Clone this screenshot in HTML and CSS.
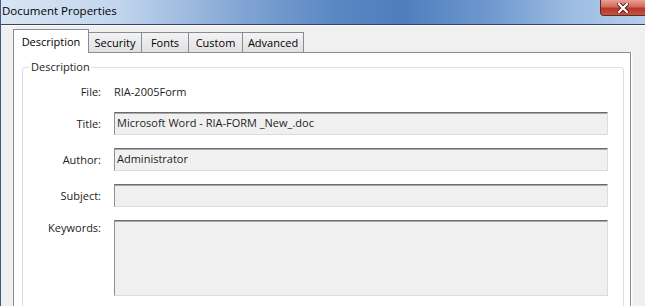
FILE: index.html
```html
<!DOCTYPE html>
<html lang="en">
<head>
  <meta charset="UTF-8">
  <title>Document Properties</title>
  <link rel="stylesheet" href="styles.css">
</head>
<body>
  <div class="window">
    <div class="titlebar">
      <span class="title">Document Properties</span>
      <div class="close">
        <svg width="12" height="10" viewBox="0 0 12 10">
          <path d="M2 1 L10 9 M10 1 L2 9" stroke="#5a1a14" stroke-width="4" stroke-linecap="square"/>
          <path d="M2 1 L10 9 M10 1 L2 9" stroke="#ffffff" stroke-width="2.2" stroke-linecap="square"/>
        </svg>
      </div>
    </div>

    <div class="dialog">
      <!-- Tabs -->
      <div class="tabs">
        <div class="tab active tab-desc">Description</div>
        <div class="tab tab-sec">Security</div>
        <div class="tab tab-fonts">Fonts</div>
        <div class="tab tab-custom">Custom</div>
        <div class="tab tab-adv">Advanced</div>
      </div>

      <div class="panel">
        <fieldset class="group">
          <legend>Description</legend>
          <div class="row row-file">
            <div class="label">File:</div>
            <div class="value">RIA-2005Form</div>
          </div>
          <div class="row">
            <div class="label">Title:</div>
            <div class="field">Microsoft Word - RIA-FORM _New_.doc</div>
          </div>
          <div class="row">
            <div class="label">Author:</div>
            <div class="field">Administrator</div>
          </div>
          <div class="row">
            <div class="label">Subject:</div>
            <div class="field"></div>
          </div>
          <div class="row row-top">
            <div class="label">Keywords:</div>
            <div class="field area"></div>
          </div>
        </fieldset>
      </div>
    </div>
  </div>
</body>
</html>
```

FILE: styles.css
```css
body {
  margin: 0;
  padding: 0;
  font-family: 'Segoe UI', 'Open Sans', sans-serif;
  font-size: 11px;
  line-height: 16px;
  color: #1e1e1e;
  background: #f0f0f0;
  overflow: hidden;
}

.window {
  width: 645px;
  height: 306px;
  border-left: 1px solid #3d5a82;
  box-sizing: border-box;
  overflow: hidden;
}

.titlebar {
  height: 24px;
  display: flex;
  justify-content: space-between;
  align-items: flex-start;
  background: linear-gradient(to right, #d8e5f4 0%, #c3d6ee 18%, #7fa3d3 38%, #5a87c3 52%, #4f7dbd 62%, #6f99cf 76%, #9bbbe2 88%, #b6cdea 100%);
  border-bottom: 1px solid #34475f;
}

.title {
  padding: 3px 0 0 1px;
  font-size: 11.5px;
  color: #000;
}

.close {
  width: 46px;
  height: 16px;
  margin-right: -1px;
  box-sizing: border-box;
  background: linear-gradient(#e8a093 0%, #d26a5a 45%, #b8372a 55%, #c9513f 100%);
  border: 1px solid #5b2b2b;
  border-top: none;
  border-radius: 0 0 0 4px;
  display: flex;
  justify-content: center;
  align-items: center;
}

.close svg {
  display: block;
}

.dialog {
  padding: 2px 0 0 12px;
  border-top: 1px solid #fbfbfb;
}

.tabs {
  display: flex;
  align-items: flex-end;
  height: 24px;
  position: relative;
  z-index: 1;
}

.tab {
  height: 20px;
  line-height: 19px;
  box-sizing: border-box;
  text-align: center;
  background: linear-gradient(#f3f3f3, #e1e1e1);
  border: 1px solid #898c95;
  border-bottom: none;
  margin-right: -1px;
  color: #000;
}

.tab.active {
  height: 24px;
  line-height: 23px;
  background: #fff;
  margin-bottom: -1px;
}

.tab-desc { width: 76px; }
.tab-sec { width: 54px; }
.tab-fonts { width: 48px; }
.tab-custom { width: 55px; }
.tab-adv { width: 62px; }

.panel {
  width: 618px;
  height: 260px;
  box-sizing: border-box;
  background: #fff;
  border: 1px solid #898c95;
  box-shadow: 1px 0 0 #ffffff, 2px 0 0 #f6f6f6;
  padding: 6px 6px 0 8px;
}

.group {
  margin: 0;
  padding: 0 15px 0 0;
  border: 1px solid #d5dfe5;
  border-radius: 3px;
  min-width: 0;
}

.group legend {
  margin-left: 6px;
  padding: 0 2px;
  color: #1e1e1e;
}

.row {
  display: flex;
  align-items: center;
  gap: 13px;
  margin-bottom: 13px;
}

.row-file {
  height: 18px;
  margin-top: 8px;
  margin-bottom: 11px;
}

.row-top {
  align-items: flex-start;
}

.label {
  width: 78px;
  text-align: right;
  color: #222;
}

.value {
  color: #1e1e1e;
}

.field {
  flex: 1;
  height: 23px;
  box-sizing: border-box;
  background: #f0f0f0;
  border-top: 1px solid #6b6b6b;
  border-left: 1px solid #8e8e8e;
  border-right: 1px solid #dcdcdc;
  border-bottom: 1px solid #dcdcdc;
  box-shadow: inset 0 1px 0 #a8a8a8;
  padding: 1px 0 0 2px;
  line-height: 18px;
  color: #1e1e1e;
}

.field.area {
  height: 76px;
}
```
